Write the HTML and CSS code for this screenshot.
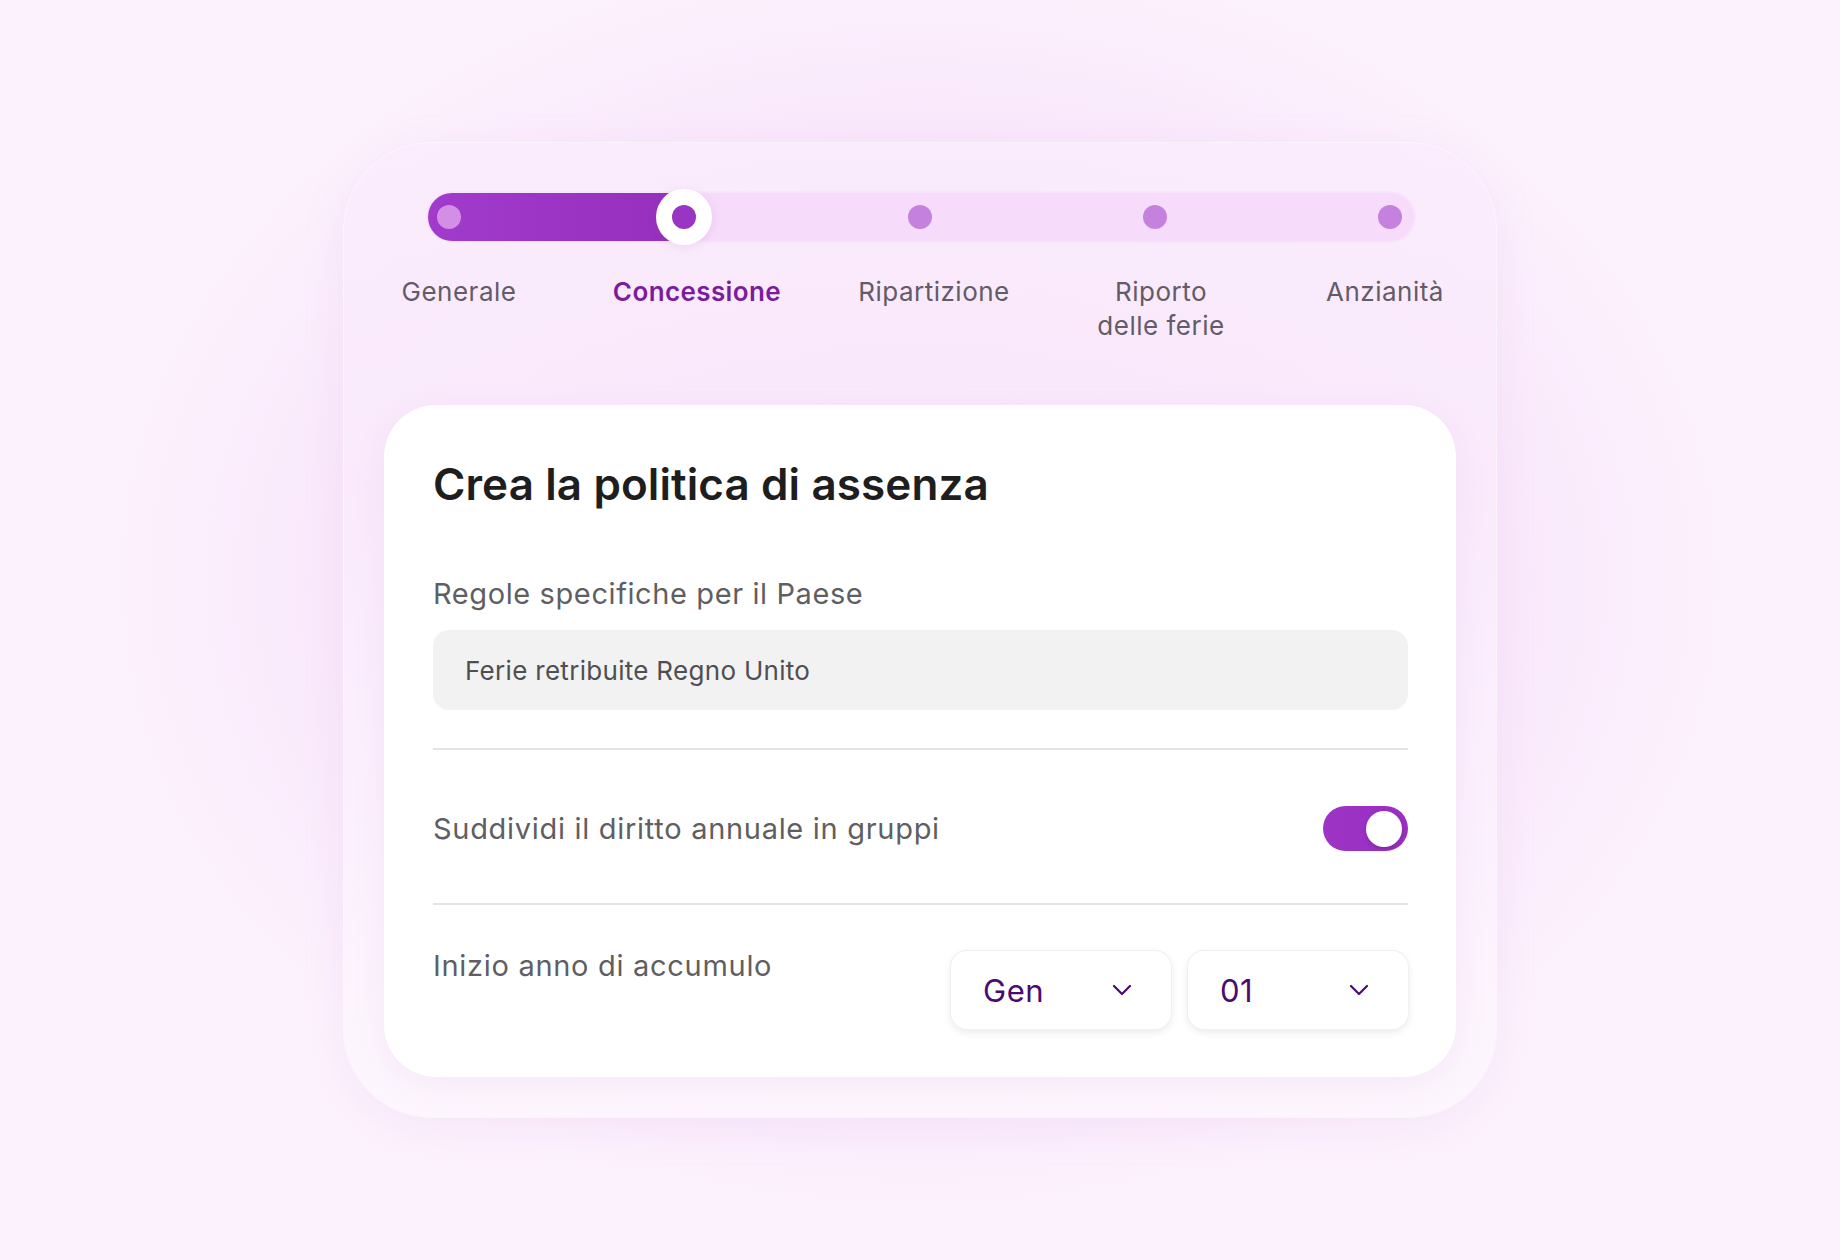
FILE: index.html
```html
<!DOCTYPE html>
<html lang="it">
<head>
<meta charset="utf-8">
<title>Crea la politica di assenza</title>
<link rel="stylesheet" href="styles.css">
</head>
<body>
<main class="stage">
  <section class="panel">
    <div class="stepper">
      <div class="track">
        <div class="fill"></div>
        <span class="dot done"></span>
        <span class="dot current"></span>
        <span class="dot"></span>
        <span class="dot"></span>
        <span class="dot"></span>
      </div>
    </div>
    <ol class="labels">
      <li>Generale</li>
      <li class="active">Concessione</li>
      <li>Ripartizione</li>
      <li>Riporto<br>delle ferie</li>
      <li>Anzianità</li>
    </ol>
    <div class="card">
      <h1 class="title">Crea la politica di assenza</h1>
      <div class="field">
        <div class="field-label">Regole specifiche per il Paese</div>
        <div class="input">Ferie retribuite Regno Unito</div>
      </div>
      <div class="row toggle-row">
        <span class="row-label">Suddividi il diritto annuale in gruppi</span>
        <span class="toggle"><span class="knob"></span></span>
      </div>
      <div class="row select-row">
        <span class="row-label">Inizio anno di accumulo</span>
        <div class="selects">
          <div class="select"><span>Gen</span>
            <svg class="chev" viewBox="0 0 20 12" width="20" height="12"><path d="M2 2 L10 10 L18 2" fill="none" stroke="currentColor" stroke-width="2.2" stroke-linecap="round" stroke-linejoin="round"/></svg>
          </div>
          <div class="select"><span>01</span>
            <svg class="chev" viewBox="0 0 20 12" width="20" height="12"><path d="M2 2 L10 10 L18 2" fill="none" stroke="currentColor" stroke-width="2.2" stroke-linecap="round" stroke-linejoin="round"/></svg>
          </div>
        </div>
      </div>
    </div>
  </section>
</main>
</body>
</html>
```

FILE: styles.css
```css
* { box-sizing: border-box; }
html, body { margin: 0; padding: 0; }
body {
  width: 1840px;
  height: 1260px;
  overflow: hidden;
  font-family: "Inter", "Noto Sans", sans-serif;
  background:
    radial-gradient(ellipse 820px 640px at 50% 46%, #f3d2f6 0%, #f5daf8 40%, #f9e8fb 72%, #fcf2fd 100%);
}
.stage {
  display: flex;
  justify-content: center;
  padding-top: 143px;
}
.panel {
  width: 1152px;
  border-radius: 88px;
  padding: 50px 40px 40px;
  background: linear-gradient(180deg, rgba(250,236,252,0.9) 0%, rgba(250,234,252,0.85) 35%, rgba(253,246,254,0.95) 100%);
  box-shadow: 0 0 0 1px rgba(255,255,255,0.55), 0 10px 40px rgba(220,170,230,0.18);
}
.stepper {
  padding: 0 42px 0 44px;
}
.track {
  position: relative;
  height: 48px;
  border-radius: 24px;
  background: #f7dbfa;
  box-shadow: 0 0 0 2px #f9e5fb;
  display: flex;
  align-items: center;
  justify-content: space-between;
  padding: 0 12px 0 9px;
}
.fill {
  position: absolute;
  left: 0; top: 0; bottom: 0;
  width: 262px;
  border-radius: 24px 0 0 24px;
  background: linear-gradient(90deg, #a13bcb 0%, #962ebd 100%);
}
.dot {
  position: relative;
  width: 24px;
  height: 24px;
  border-radius: 50%;
  background: #c482de;
}
.dot.done { background: #d58ee5; }
.dot.current {
  background: #9a34c2;
  box-shadow: 0 0 0 16px #ffffff, 0 2px 10px 16px rgba(150,60,180,0.12);
}
.labels {
  list-style: none;
  margin: 34px -40px 0;
  padding: 0;
  display: grid;
  grid-template-columns: 230px 246px 228px 226px 1fr;
  text-align: center;
  font-size: 26px;
  line-height: 34px;
  color: #625b68;
  letter-spacing: 0.5px;
}
.labels li.active {
  color: #7a1c9e;
  font-weight: 600;
  letter-spacing: 0.4px;
}
.card {
  margin-top: 62px;
  background: #ffffff;
  border-radius: 52px;
  padding: 48px 48px 48px 49px;
  box-shadow: 0 8px 30px rgba(200,150,210,0.12);
}
.title {
  margin: 0;
  font-size: 44px;
  line-height: 62px;
  font-weight: 600;
  color: #1e1e1e;
  letter-spacing: 0.1px;
}
.field { margin-top: 61px; }
.field-label {
  font-size: 29px;
  line-height: 36px;
  color: #5f5f63;
  letter-spacing: 0.6px;
}
.input {
  margin-top: 18px;
  height: 80px;
  border-radius: 16px;
  background: #f2f2f2;
  display: flex;
  align-items: center;
  padding-left: 32px;
  font-size: 26px;
  color: #4f4f53;
  letter-spacing: 0.3px;
}
.row {
  display: flex;
  justify-content: space-between;
  border-top: 2px solid #e4e4e6;
}
.toggle-row {
  margin-top: 38px;
  align-items: center;
  padding: 56px 0 52px;
}
.select-row {
  align-items: flex-start;
  padding-top: 46px;
}
.row-label {
  font-size: 29px;
  line-height: 32px;
  color: #5f5f63;
  letter-spacing: 0.7px;
}
.select-row .row-label { margin-top: -1px; }
.toggle {
  width: 85px;
  height: 45px;
  border-radius: 23px;
  background: linear-gradient(90deg, #9d34c6 0%, #9a2fc2 100%);
  display: flex;
  align-items: center;
  justify-content: flex-end;
  padding-right: 6px;
}
.knob {
  width: 36px;
  height: 36px;
  border-radius: 50%;
  background: #fff;
  box-shadow: 0 2px 4px rgba(60,0,80,0.25);
}
.selects {
  display: flex;
  gap: 17px;
}
.select {
  width: 220px;
  height: 78px;
  border-radius: 16px;
  background: #fff;
  box-shadow: 0 0 0 1px #f0f0f0, 0 3px 8px rgba(0,0,0,0.09);
  display: flex;
  align-items: center;
  justify-content: space-between;
  padding: 0 39px 0 32px;
  font-size: 31px;
  color: #4b0a70;
  letter-spacing: 0.5px;
}
.chev { color: #4b0a70; }
```
